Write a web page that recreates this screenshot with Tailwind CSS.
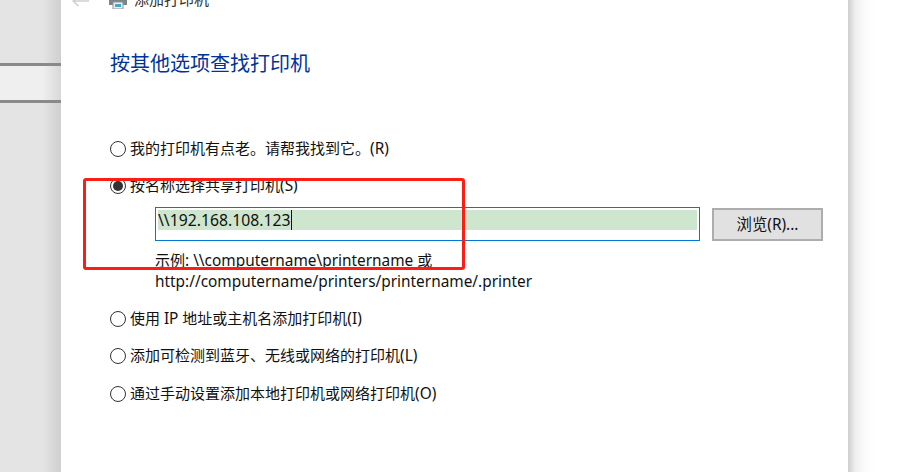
<!DOCTYPE html>
<html lang="zh-CN">
<head>
  <meta charset="UTF-8" />
  <title>添加打印机</title>
  <script src="https://cdn.jsdelivr.net/npm/@tailwindcss/browser@4"></script>
</head>
<body class="w-[902px] h-[472px] overflow-hidden bg-white font-['Noto_Sans','Noto_Sans_CJK_SC',sans-serif] text-[15px] text-[#111]">
  <div class="relative flex h-[472px]">
    <!-- window behind -->
    <div class="w-[61px] h-full bg-[linear-gradient(90deg,#e4e4e4_0%,#e4e4e4_70%,#cfcfcf_100%)] pt-[63px]">
      <div class="h-[40px] border-y-[3px] border-[#8a8a8a] bg-[linear-gradient(90deg,#efefef_0%,#efefef_70%,#d8d8d8_100%)]"></div>
    </div>

    <!-- dialog -->
    <div class="w-[787px] h-full bg-white pl-[49px]">
      <div class="flex items-center h-[20px] -mt-[11px] -ml-[38px]">
        <svg class="w-[17px] h-[12px] mr-[19px] mt-[3px]" viewBox="0 0 17 12" fill="none" stroke="#cfcfcf" stroke-width="1.5">
          <path d="M1 6h16M6.5 .8 1.2 6l5.3 5.2" />
        </svg>
        <svg class="w-[20px] h-[20px] mr-[6px]" viewBox="0 0 20 20">
          <rect x="4" y="1" width="12" height="7" fill="#d9d9d9" />
          <rect x="1" y="7" width="18" height="9" fill="#7d8488" />
          <rect x="5" y="13" width="10" height="7" fill="#e9eef0" stroke="#8d9498" />
          <rect x="7" y="15" width="6" height="3" fill="#45a7c4" />
        </svg>
        <span class="text-[#333] leading-[20px]">添加打印机</span>
      </div>

      <h1 class="mt-[41px] h-[28px] text-[20px] leading-[28px] text-[#003399]">按其他选项查找打印机</h1>

      <div class="mt-[61px] flex flex-col">
        <label class="flex items-center gap-[4px] h-[20px]">
          <span class="w-[16px] h-[16px] rounded-full border border-[#333]"></span>
          <span>我的打印机有点老。请帮我找到它。<span class="text-[15.4px]">(R)</span></span>
        </label>

        <label class="flex items-center gap-[4px] h-[20px] mt-[17px]">
          <span class="flex items-center justify-center w-[16px] h-[16px] rounded-full border border-[#333]">
            <span class="w-[10px] h-[10px] rounded-full bg-[#333]"></span>
          </span>
          <span>按名称选择共享打印机<span class="text-[15.4px]">(S)</span></span>
        </label>

        <div class="flex items-start mt-[11px] ml-[45px]">
          <div class="w-[545px] h-[34px] border border-[#0078d7] p-[2px]">
            <div class="flex items-center h-[20px] bg-[#cde6cd]">
              <span class="leading-[20px] text-[15.75px] border-r border-[#111]">\\192.168.108.123</span>
            </div>
          </div>
          <button class="w-[111px] h-[33px] mt-[1px] ml-[12px] border-2 border-[#adadad] bg-[#e1e1e1] leading-[28px] text-[15.4px]">浏览(R)...</button>
        </div>

        <p class="ml-[45px] mt-[9px] leading-[20px]">示例<span class="text-[15.4px]">: \\computername\printername </span>或<br /><span class="text-[15.4px]">http://computername/printers/printername/.printer</span></p>

        <label class="flex items-center gap-[4px] h-[20px] mt-[17px]">
          <span class="w-[16px] h-[16px] rounded-full border border-[#333]"></span>
          <span>使用 <span class="text-[15.4px]">IP</span> 地址或主机名添加打印机<span class="text-[15.4px]">(I)</span></span>
        </label>
        <label class="flex items-center gap-[4px] h-[20px] mt-[17px]">
          <span class="w-[16px] h-[16px] rounded-full border border-[#333]"></span>
          <span>添加可检测到蓝牙、无线或网络的打印机<span class="text-[15.4px]">(L)</span></span>
        </label>
        <label class="flex items-center gap-[4px] h-[20px] mt-[18px]">
          <span class="w-[16px] h-[16px] rounded-full border border-[#333]"></span>
          <span>通过手动设置添加本地打印机或网络打印机<span class="text-[15.4px]">(O)</span></span>
        </label>
      </div>
    </div>

    <div class="w-[54px] h-full bg-[linear-gradient(90deg,#cfcfcf_0%,#efefef_14%,#fbfbfb_30%,#ffffff_50%)]"></div>

    <!-- red annotation box -->
    <div class="absolute left-[83px] top-[178px] w-[382px] h-[92px] border-[3px] border-[#fa1e14] rounded-[3px]"></div>
  </div>
</body>
</html>
